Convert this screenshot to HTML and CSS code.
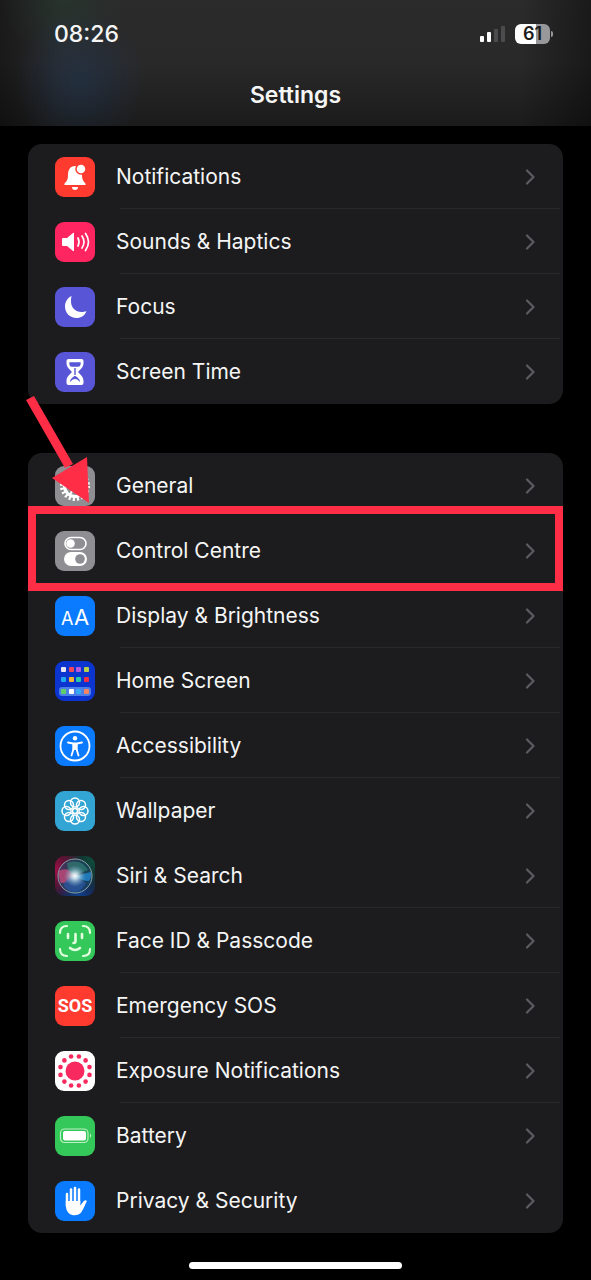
FILE: index.html
```
<!DOCTYPE html>
<html lang="en">
<head>
  <meta charset="utf-8">
  <meta name="viewport" content="width=device-width, initial-scale=1">
  <title>Settings</title>
  <link rel="stylesheet" href="styles.css">
</head>
<body>
  <svg class="defs" width="0" height="0" aria-hidden="true">
    <symbol id="chevron" viewBox="0 0 10 16">
      <path d="M2 1.500 8.500 8 2 14.500" fill="none" stroke="#5c5c60" stroke-width="2.200" stroke-linecap="round" stroke-linejoin="round"/>
    </symbol>
  </svg>

  <header>
    <div class="status">
      <span class="time">08:26</span>
      <div class="status-icons">
        <svg width="28" height="18" viewBox="0 0 28 18">
          <rect x="1" y="11" width="4" height="6" rx="1" fill="#fff"/>
          <rect x="8" y="7" width="4" height="10" rx="1" fill="#fff"/>
          <rect x="15" y="4" width="4" height="13" rx="1" fill="#4c4c4e"/>
          <rect x="22" y="1" width="4" height="16" rx="1" fill="#4c4c4e"/>
        </svg>
        <span class="battery">61</span>
      </div>
    </div>
    <h1>Settings</h1>
  </header>

  <main>
    <nav class="group">
      <a class="row" href="#">
        <svg class="icon red" viewBox="0 0 40 40">
          <path d="M20 9c-5 0-7 4-7 9 0 4-1 6-3 8-1 1-1 2 0 2h20c1 0 1-1 0-2-2-2-3-4-3-8 0-5-2-9-7-9z" fill="#fff"/>
          <path d="M17 30h6c0 2-1 3-3 3s-3-1-3-3z" fill="#fff"/>
          <circle cx="26" cy="12" r="5" fill="#fff" stroke="#ff3b30" stroke-width="1.500"/>
        </svg>
        <span class="label">Notifications</span>
        <svg class="chevron"><use href="#chevron"/></svg>
      </a>
      <a class="row" href="#">
        <svg class="icon pink" viewBox="0 0 40 40">
          <path d="M8 16h4l6-5q1-.5 1 .5v17q0 1-1 .5l-6-5H8q-1 0-1-1v-6q0-1 1-1z" fill="#fff"/>
          <path d="M23 16q2 4 0 8M27 14q4 6 0 12M30.500 11.500q6 8.500 0 17" fill="none" stroke="#fff" stroke-width="1.700" stroke-linecap="round"/>
        </svg>
        <span class="label">Sounds &amp; Haptics</span>
        <svg class="chevron"><use href="#chevron"/></svg>
      </a>
      <a class="row" href="#">
        <svg class="icon indigo" viewBox="0 0 40 40">
          <path d="M16.500 9C12.500 11 10 15 10 19.500 10 26 15 31 21.500 31c4.500 0 8.500-2.500 10-7-1.500.8-3.500 1-5 1-6 0-10.500-4.500-10.500-10.500 0-2 0-3.800.5-5.500z" fill="#fff"/>
        </svg>
        <span class="label">Focus</span>
        <svg class="chevron"><use href="#chevron"/></svg>
      </a>
      <a class="row" href="#">
        <svg class="icon indigo" viewBox="0 0 40 40">
          <path d="M13.500 7h13q2 0 2 2v2c0 4-3 6.500-5.500 9 2.500 2.500 5.500 5 5.500 9v2q0 2-2 2h-13q-2 0-2-2v-2c0-4 3-6.500 5.500-9-2.500-2.500-5.500-5-5.500-9V9q0-2 2-2z" fill="#fff"/>
          <path d="M15 11h10c0 2-1 3-2 3h-6c-1 0-2-1-2-3zM20 16v7" fill="#5856d6" stroke="#5856d6" stroke-width="1.400"/>
          <path d="M15 30c0-3 2-4 4.500-6h1c2.500 2 4.500 3 4.500 6-2-2-3-3-5-3s-3 1-5 3z" fill="#5856d6"/>
        </svg>
        <span class="label">Screen Time</span>
        <svg class="chevron"><use href="#chevron"/></svg>
      </a>
    </nav>

    <nav class="group">
      <a class="row" href="#">
        <svg class="icon gray" viewBox="0 0 40 40">
          <circle cx="20" cy="20" r="13" fill="none" stroke="#fff" stroke-width="4" stroke-dasharray="2.100 1.984"/>
          <circle cx="20" cy="20" r="10.500" fill="none" stroke="#fff" stroke-width="3"/>
          <path d="M20 20h11M20 20l-5.500 9.500M20 20l-5.500-9.500" stroke="#fff" stroke-width="2"/>
          <circle cx="20" cy="20" r="4" fill="none" stroke="#fff" stroke-width="2"/>
        </svg>
        <span class="label">General</span>
        <svg class="chevron"><use href="#chevron"/></svg>
      </a>
      <a class="row marked" href="#">
        <svg class="icon gray" viewBox="0 0 40 40">
          <rect x="10" y="6.500" width="21" height="12" rx="6" fill="none" stroke="#fff" stroke-width="1.600"/>
          <circle cx="15.500" cy="12.500" r="4.300" fill="#fff"/>
          <rect x="9" y="21" width="23" height="14" rx="7" fill="#fff"/>
          <circle cx="25" cy="28" r="4.800" fill="#8e8e93"/>
        </svg>
        <span class="label">Control Centre</span>
        <svg class="chevron"><use href="#chevron"/></svg>
      </a>
      <a class="row" href="#">
        <svg class="icon blue" viewBox="0 0 40 40">
          <text class="aa" x="6" y="29" font-size="18">A</text>
          <text class="aa" x="19" y="29" font-size="22">A</text>
        </svg>
        <span class="label">Display &amp; Brightness</span>
        <svg class="chevron"><use href="#chevron"/></svg>
      </a>
      <a class="row" href="#">
        <svg class="icon navy" viewBox="0 0 40 40">
          <rect x="6" y="6" width="5" height="5" rx="1" fill="#e8e6f5"/>
          <rect x="14" y="6" width="5" height="5" rx="1" fill="#f0485a"/>
          <rect x="21" y="6" width="5" height="5" rx="1" fill="#b65be0"/>
          <rect x="29" y="6" width="5" height="5" rx="1" fill="#b8cf4a"/>
          <rect x="6" y="16" width="5" height="5" rx="1" fill="#20a8f0"/>
          <rect x="14" y="16" width="5" height="5" rx="1" fill="#f5b32e"/>
          <rect x="21" y="16" width="5" height="5" rx="1" fill="#28c8a8"/>
          <rect x="29" y="16" width="5" height="5" rx="1" fill="#f03048"/>
          <rect x="4" y="26" width="32" height="9" rx="3" fill="#4d7fe8"/>
          <rect x="6" y="28" width="5" height="5" rx="1" fill="#5fd068"/>
          <rect x="14" y="28" width="5" height="5" rx="1" fill="#fff"/>
          <rect x="21" y="28" width="5" height="5" rx="1" fill="#35aaf5"/>
          <rect x="29" y="28" width="5" height="5" rx="1" fill="#f58560"/>
        </svg>
        <span class="label">Home Screen</span>
        <svg class="chevron"><use href="#chevron"/></svg>
      </a>
      <a class="row" href="#">
        <svg class="icon blue" viewBox="0 0 40 40">
          <circle cx="20" cy="20" r="14.500" fill="none" stroke="#fff" stroke-width="1.800"/>
          <circle cx="20" cy="12.300" r="2.200" fill="#fff"/>
          <path d="M13 16.500l5 1h4l5-1M18.500 18v5l-2 6.500M21.500 18v5l2 6.500" fill="none" stroke="#fff" stroke-width="1.800" stroke-linecap="round"/>
          <path d="M17.500 17h5v7h-5z" fill="#fff"/>
        </svg>
        <span class="label">Accessibility</span>
        <svg class="chevron"><use href="#chevron"/></svg>
      </a>
      <a class="row plain" href="#">
        <svg class="icon cyan" viewBox="0 0 40 40">
          <g fill="none" stroke="#fff" stroke-width="1.500">
            <circle cx="20" cy="11.500" r="4.500"/>
            <circle cx="26" cy="14" r="4.500"/>
            <circle cx="28.500" cy="20" r="4.500"/>
            <circle cx="26" cy="26" r="4.500"/>
            <circle cx="20" cy="28.500" r="4.500"/>
            <circle cx="14" cy="26" r="4.500"/>
            <circle cx="11.500" cy="20" r="4.500"/>
            <circle cx="14" cy="14" r="4.500"/>
            <circle cx="20" cy="20" r="2.500"/>
          </g>
        </svg>
        <span class="label">Wallpaper</span>
        <svg class="chevron"><use href="#chevron"/></svg>
      </a>
      <a class="row" href="#">
        <svg class="icon siri" viewBox="0 0 40 40">
          <defs>
            <radialGradient id="glow">
              <stop offset="0" stop-color="#fff"/>
              <stop offset=".3" stop-color="#d8f0f5" stop-opacity=".8"/>
              <stop offset="1" stop-color="#6aa8c8" stop-opacity="0"/>
            </radialGradient>
          </defs>
          <circle cx="20" cy="20" r="17" fill="#1e4a6c" fill-opacity=".6"/>
          <path d="M4 15q8-5 16 4-5 9-14 8-3-6-2-12z" fill="#c94c7c" fill-opacity=".75"/>
          <path d="M12 7q14-5 21 7l-13 5q-8-2-8-12z" fill="#348878" fill-opacity=".6"/>
          <path d="M20 20l16-4q1 6-2 9-8 0-14-5z" fill="#2490e0" fill-opacity=".7"/>
          <path d="M8 29q6-10 13-8l10 6q-5 9-12 9-7-1-11-7z" fill="#2c58a4" fill-opacity=".7"/>
          <circle cx="20" cy="20" r="11" fill="url(#glow)"/>
          <circle cx="20" cy="20" r="17" fill="none" stroke="#8aa2a8" stroke-width="1"/>
        </svg>
        <span class="label">Siri &amp; Search</span>
        <svg class="chevron"><use href="#chevron"/></svg>
      </a>
      <a class="row" href="#">
        <svg class="icon green" viewBox="0 0 40 40">
          <g fill="none" stroke="#e4ffdf" stroke-width="2.200" stroke-linecap="round">
            <path d="M5 12q0-7 7-7M28 5q7 0 7 7M35 28q0 7-7 7M12 35q-7 0-7-7"/>
            <path d="M13 13v4M27 13v4M20.500 13v7q0 2-2 2M15 27q5 4 10 0" stroke-width="2.600"/>
          </g>
        </svg>
        <span class="label">Face ID &amp; Passcode</span>
        <svg class="chevron"><use href="#chevron"/></svg>
      </a>
      <a class="row" href="#">
        <span class="icon red sos">SOS</span>
        <span class="label">Emergency SOS</span>
        <svg class="chevron"><use href="#chevron"/></svg>
      </a>
      <a class="row" href="#">
        <svg class="icon white" viewBox="0 0 40 40">
          <g fill="#f7295f">
            <circle cx="20" cy="20" r="9.500"/>
            <circle cx="23.900" cy="5.500" r="2.300"/>
            <circle cx="30.600" cy="9.400" r="2.300"/>
            <circle cx="34.500" cy="16.100" r="2.300"/>
            <circle cx="34.500" cy="23.900" r="2.300"/>
            <circle cx="30.600" cy="30.600" r="2.300"/>
            <circle cx="23.900" cy="34.500" r="2.300"/>
            <circle cx="16.100" cy="34.500" r="2.300"/>
            <circle cx="9.400" cy="30.600" r="2.300"/>
            <circle cx="5.500" cy="23.900" r="2.300"/>
            <circle cx="5.500" cy="16.100" r="2.300"/>
            <circle cx="9.400" cy="9.400" r="2.300"/>
            <circle cx="16.100" cy="5.500" r="2.300"/>
          </g>
        </svg>
        <span class="label">Exposure Notifications</span>
        <svg class="chevron"><use href="#chevron"/></svg>
      </a>
      <a class="row plain" href="#">
        <svg class="icon green" viewBox="0 0 40 40">
          <rect x="5.500" y="13" width="27.500" height="13.500" rx="4" fill="none" stroke="#bdf0c4" stroke-width="1.200"/>
          <rect x="8" y="15" width="23" height="9.500" rx="2" fill="#fff"/>
          <path d="M35 17.500q2.500 2 0 4.500z" fill="#bdf0c4"/>
        </svg>
        <span class="label">Battery</span>
        <svg class="chevron"><use href="#chevron"/></svg>
      </a>
      <a class="row" href="#">
        <svg class="icon blue" viewBox="0 0 40 40">
          <path d="M12 13v12M16 8.500V22M20 7v15M24 8.500V22" fill="none" stroke="#fff" stroke-width="2.500" stroke-linecap="round"/>
          <path d="M10.800 20h14.500v4.500l3.500-4.500q2.500-1.500 3 .3c-2 4.200-3.500 8-5.500 11-2.500 3.700-9 4-12.500 1-3-3-3-7-3-12.300z" fill="#fff"/>
        </svg>
        <span class="label">Privacy &amp; Security</span>
        <svg class="chevron"><use href="#chevron"/></svg>
      </a>

      <!-- arrow pointing at Control Centre -->
      <svg class="arrow" width="80" height="120" viewBox="0 0 80 120">
        <path d="M6 10 14 6 53 74 45 78zM67 67 32 88 69 113z" fill="#ff2d46"/>
      </svg>
    </nav>
  </main>

  <div class="home-bar"></div>
</body>
</html>
```
FILE: styles.css
```
* {
  box-sizing: border-box;
}
body {
  font-family: Inter, "Liberation Sans", sans-serif;
  margin: 0;
  background-color: #000;
  color: #f5f5f5;
}
.defs {
  position: absolute;
}
header {
  height: 126px;
  background:
    radial-gradient(ellipse 64px 70px at 80px 80px, rgba(30, 60, 100, 0.4), transparent),
    radial-gradient(ellipse 60px 60px at 64px 0, rgba(30, 70, 50, 0.3), transparent),
    linear-gradient(to right, rgba(0, 0, 0, 0.4), transparent 10%, transparent 88%, rgba(0, 0, 0, 0.4)),
    linear-gradient(#2b2b2b, #29292a 50%, #1b1b1b);
}
.status {
  display: flex;
  justify-content: space-between;
  align-items: center;
  height: 68px;
  padding: 0 41px 0 54px;
}
.time {
  font-size: 23px;
  font-weight: 500;
}
.status-icons {
  display: flex;
  align-items: center;
  gap: 8px;
}
.battery {
  position: relative;
  width: 35px;
  height: 20px;
  border-radius: 6px;
  background: linear-gradient(to right, #fff 60%, #98989a 60%);
  color: #1c1c1e;
  font-size: 18px;
  font-weight: 600;
  line-height: 20px;
  text-align: center;
}
.battery::after {
  content: "";
  position: absolute;
  right: -3px;
  top: 7px;
  width: 2px;
  height: 6px;
  border-radius: 0 2px 2px 0;
  background-color: #98989a;
}
h1 {
  margin: 0;
  font-size: 23px;
  font-weight: 600;
  line-height: 54px;
  text-align: center;
}
main {
  display: flex;
  flex-direction: column;
  gap: 49px;
  padding: 18px 28px 0;
}
.group {
  position: relative;
  border-radius: 14px;
  background-color: #1c1c1e;
}
.row {
  position: relative;
  display: flex;
  align-items: center;
  gap: 21px;
  height: 65px;
  padding: 0 28px 0 27px;
  color: inherit;
  text-decoration: none;
}
.row::after {
  content: "";
  position: absolute;
  left: 92px;
  right: 3px;
  bottom: 0;
  height: 1px;
  background-color: #29292b;
}
.row:last-of-type::after,
.plain::after,
.marked::after {
  display: none;
}
.label {
  flex: 1;
  font-size: 21px;
}
.icon {
  width: 40px;
  height: 40px;
  border-radius: 9px;
}
.chevron {
  width: 10px;
  height: 16px;
}
.red {
  background-color: #ff3b30;
}
.pink {
  background-color: #ff2560;
}
.indigo {
  background-color: #5856d6;
}
.gray {
  background-color: #8e8e93;
}
.blue {
  background-color: #0a7aff;
}
.navy {
  background-color: #0c35d0;
}
.cyan {
  background-color: #32a5d4;
}
.green {
  background-color: #34c759;
}
.white {
  background-color: #fff;
}
.siri {
  background:
    radial-gradient(circle at 0 35%, #a01048, transparent 60%),
    radial-gradient(circle at 100% 10%, #0c5040, transparent 60%),
    radial-gradient(circle at 60% 100%, #10408c, transparent 60%),
    #1a1420;
}
.aa {
  fill: #fff;
}
.sos {
  color: #fff;
  font-family: Roboto, "Liberation Sans", sans-serif;
  font-size: 18px;
  font-weight: 700;
  line-height: 40px;
  text-align: center;
}
/* highlighted row */
.marked {
  z-index: 1;
}
.marked::before {
  content: "";
  position: absolute;
  inset: -12px 0 -8px;
  border: 8px solid #ff2d46;
}
/* row divider above sits inside the highlight */
.row:has(+ .marked)::after {
  display: none;
}
.arrow {
  position: absolute;
  left: -8px;
  top: -63px;
  z-index: 2;
}
.home-bar {
  width: 36%;
  height: 7px;
  margin: 29px auto 11px;
  border-radius: 4px;
  background-color: #fff;
}
```
